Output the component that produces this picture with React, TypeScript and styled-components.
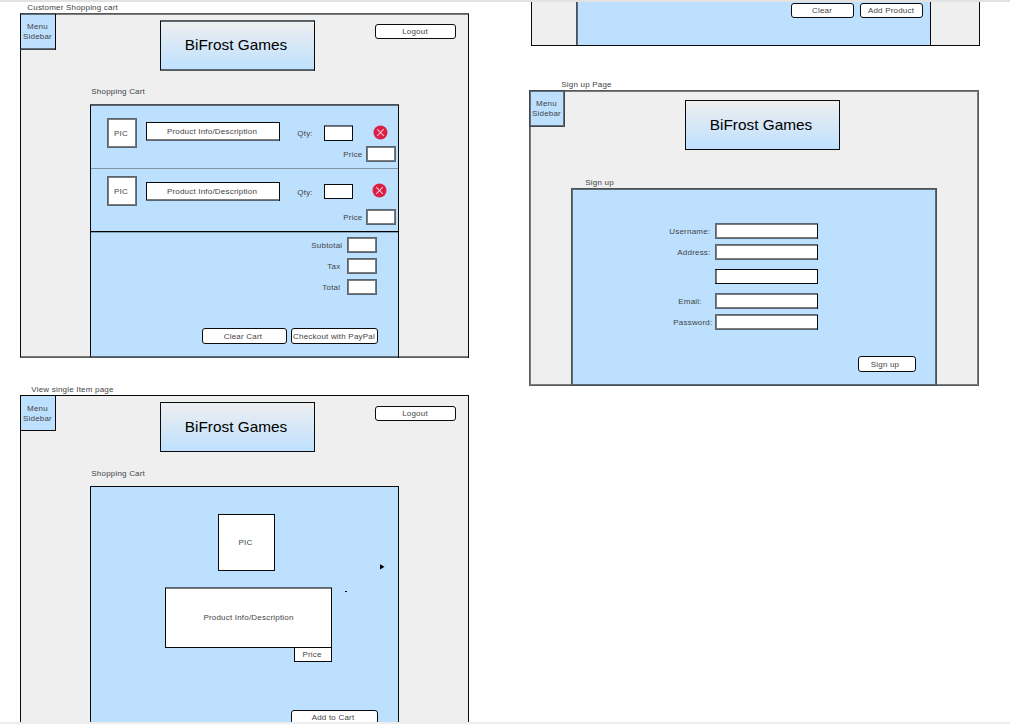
import React from "react";
import styled, { createGlobalStyle, css } from "styled-components";

const GlobalStyle = createGlobalStyle`
  body { margin: 0; background: #fff; }
  *, *::before, *::after { box-sizing: border-box; }
`;

/* Four letters, top/right/bottom/left: c = crisp 1px line, s = soft 2px line, n = none. */
type Edges = string;

const outline = (edges: Edges, outer: string, inner: string) => {
  const dirs = [
    [0, 1],
    [-1, 0],
    [0, -1],
    [1, 0],
  ];
  const first: string[] = [];
  const second: string[] = [];
  edges.split("").forEach((e, i) => {
    if (e === "n") return;
    const [x, y] = dirs[i];
    first.push(`inset ${x}px ${y}px 0 ${e === "c" ? "#0a0a0a" : outer}`);
    if (e === "s") second.push(`inset ${x * 2}px ${y * 2}px 0 ${inner}`);
  });
  return css`
    box-shadow: ${[...first, ...second].join(", ")};
  `;
};

type Place = { $l?: number; $t?: number };
const place = css<Place>`
  margin-left: ${(p) => p.$l ?? 0}px;
  margin-top: ${(p) => p.$t ?? 0}px;
`;

const Canvas = styled.main`
  width: 1010px;
  height: 724px;
  overflow: hidden;
  display: grid;
  grid-template-rows: 2px 720px 2px;
  background: #fff;
  font-family: "Liberation Sans", Arial, sans-serif;
  font-size: 8px;
  line-height: 10px;
  letter-spacing: 0.2px;
  color: #444;
`;

const Edge = styled.div<{ $tone: string }>`
  background: ${(p) => p.$tone};
`;

const Columns = styled.div`
  display: flex;
  align-items: flex-start;
  overflow: hidden;
`;

const Column = styled.section<{ $w: number; $l: number }>`
  width: ${(p) => p.$w}px;
  margin-left: ${(p) => p.$l}px;
  flex: none;
  display: flex;
  flex-direction: column;
  align-items: flex-start;
`;

const Label = styled.div<Place & { $w?: number }>`
  ${place}
  ${(p) => p.$w !== undefined && `width: ${p.$w}px;`}
  flex: none;
  height: 10px;
  line-height: 12px;
  padding-left: 0.3px;
  white-space: nowrap;
`;

const Frame = styled.div<Place & { $w: number; $h: number; $edges: Edges }>`
  ${place}
  width: ${(p) => p.$w}px;
  height: ${(p) => p.$h}px;
  flex: none;
  display: flex;
  flex-direction: column;
  align-items: flex-start;
  background: #efefef;
  ${(p) => outline(p.$edges, "#5a5a5a", "#7c7c7c")}
`;

const Header = styled.header<{ $h: number }>`
  display: flex;
  flex: none;
  align-items: flex-start;
  height: ${(p) => p.$h}px;
`;

const MenuTab = styled.div<{ $h: number; $edges: Edges }>`
  width: 36px;
  height: ${(p) => p.$h}px;
  padding: 9px 1px 0 0;
  flex: none;
  text-align: center;
  background: #bde0ff;
  ${(p) => outline(p.$edges, "#40474e", "#63707c")}
`;

const BrandPlate = styled.div<Place & { $h: number; $edges: Edges }>`
  ${place}
  width: 155px;
  height: ${(p) => p.$h}px;
  padding: 0 3px 1px 0;
  flex: none;
  display: flex;
  align-items: center;
  justify-content: center;
  background: linear-gradient(#efefef, #bde0ff);
  color: #000;
  font-size: 15.35px;
  line-height: 18px;
  letter-spacing: 0;
  white-space: nowrap;
  ${(p) => outline(p.$edges, "#555a5e", "#5d666e")}
`;

const Button = styled.button<Place & { $w: number; $h?: number; $pr?: number }>`
  margin: 0;
  ${place}
  width: ${(p) => p.$w}px;
  height: ${(p) => p.$h ?? 15}px;
  flex: none;
  padding: ${(p) => (p.$h === 16 ? 1 : 0)}px ${(p) => p.$pr ?? 1}px 0 0;
  display: flex;
  align-items: center;
  justify-content: center;
  border: 1px solid #0c0c0c;
  border-radius: 3px;
  background: #fff;
  color: inherit;
  font: inherit;
  letter-spacing: inherit;
  white-space: nowrap;
`;

const Panel = styled.div<Place & { $w: number; $h: number; $edges: Edges }>`
  ${place}
  position: relative;
  width: ${(p) => p.$w}px;
  height: ${(p) => p.$h}px;
  flex: none;
  display: flex;
  flex-direction: column;
  align-items: flex-start;
  background: #bde0ff;
  ${(p) => outline(p.$edges, "#4a5258", "#5d6b77")}
`;

const Box = styled.div<Place & { $w: number; $h: number; $edges?: Edges; $pr?: number; $pt?: number }>`
  ${place}
  width: ${(p) => p.$w}px;
  height: ${(p) => p.$h}px;
  flex: none;
  display: flex;
  align-items: center;
  justify-content: center;
  padding: ${(p) => p.$pt ?? 0}px ${(p) => p.$pr ?? 2}px 0 0;
  background: #fff;
  white-space: nowrap;
  ${(p) => outline(p.$edges ?? "ssss", "#566675", "#7b7b7b")}
`;

const Row = styled.div<Place & { $h?: number }>`
  ${place}
  ${(p) => p.$h !== undefined && `height: ${p.$h}px;`}
  display: flex;
  align-items: flex-start;
  flex: none;
`;

const CartItem = styled.div<{ $h: number }>`
  height: ${(p) => p.$h}px;
  flex: none;
`;

const Rule = styled.div<{ $strong?: boolean }>`
  width: 307px;
  height: ${(p) => (p.$strong ? 2 : 1)}px;
  margin-left: 1px;
  flex: none;
  background: ${(p) => (p.$strong ? "linear-gradient(#000 50%, #86a0b6 50%)" : "#7f96ab")};
`;

const RemoveSvg = styled.svg<Place>`
  ${place}
  width: 15px;
  height: 15px;
  flex: none;
  display: block;
`;

const Marks = styled.svg`
  position: absolute;
  left: 250px;
  top: 74px;
`;

const Remove = (p: Place) => (
  <RemoveSvg {...p} viewBox="0 0 15 15">
    <circle cx="7.5" cy="7.5" r="7" fill="#dc1f44" />
    <path d="M4.2 4.2L10.8 10.8M10.8 4.2L4.2 10.8" stroke="#f7c3cd" strokeWidth="1.1" />
  </RemoveSvg>
);

const Menu = (p: { $h: number; $edges: Edges }) => (
  <MenuTab {...p}>
    Menu
    <br />
    Sidebar
  </MenuTab>
);

const Brand = (p: Place & { $h: number; $edges: Edges }) => (
  <BrandPlate {...p}>BiFrost Games</BrandPlate>
);

const totals = [
  { name: "Subtotal", l: 221, w: 36 },
  { name: "Tax", l: 237, w: 20 },
  { name: "Total", l: 232, w: 25 },
];

const fields = [
  { name: "Username:", l: 98, t: 35, h: 16, edges: "scss" },
  { name: "Address:", l: 106, t: 5, h: 16, edges: "scss" },
  { name: "", l: 106, t: 9, h: 15, edges: "cccs" },
  { name: "Email:", l: 107, t: 9, h: 16, edges: "scss" },
  { name: "Password:", l: 102, t: 5, h: 16, edges: "scss" },
];

export default function App() {
  return (
    <>
      <GlobalStyle />
      <Canvas>
        <Edge $tone="#e2e2e2" />
        <Columns>
          <Column $l={20} $w={449}>
            <Label $l={7}>Customer Shopping cart</Label>
            <Frame $t={1} $w={449} $h={345} $edges="scsc">
              <Header $h={73}>
                <Menu $h={37} $edges="scsc" />
                <Brand $l={104} $t={7} $h={51} $edges="scsc" />
                <Button $l={60} $t={11} $w={81}>Logout</Button>
              </Header>
              <Label $l={71}>Shopping Cart</Label>
              <Panel $l={70} $t={8} $w={309} $h={254} $edges="scsc">
                <CartItem $h={64}>
                  <Row $h={42}>
                    <Box $l={17} $t={14} $w={30} $h={30} $pt={1}>PIC</Box>
                    <Box $l={9} $t={18} $w={134} $h={19} $edges="ccsc">Product Info/Description</Box>
                    <Label $l={17} $t={24} $w={27}>Qty:</Label>
                    <Box $t={21} $w={29} $h={16} $edges="sccc" />
                    <Remove $l={20} $t={21} />
                  </Row>
                  <Row>
                    <Label $l={253} $t={3} $w={23}>Price</Label>
                    <Box $w={30} $h={16} />
                  </Row>
                </CartItem>
                <Rule />
                <CartItem $h={62}>
                  <Row $h={40}>
                    <Box $l={17} $t={7} $w={30} $h={30} $pt={1}>PIC</Box>
                    <Box $l={9} $t={13} $w={134} $h={19} $edges="ccsc">Product Info/Description</Box>
                    <Label $l={17} $t={18} $w={27}>Qty:</Label>
                    <Box $t={15} $w={29} $h={15} $edges="cccc" />
                    <Remove $l={19} $t={14} />
                  </Row>
                  <Row>
                    <Label $l={253} $t={3} $w={23}>Price</Label>
                    <Box $w={30} $h={16} />
                  </Row>
                </CartItem>
                <Rule $strong />
                {totals.map((t, i) => (
                  <Row key={t.name} $t={i ? 5 : 4}>
                    <Label $l={t.l} $t={3} $w={t.w}>{t.name}</Label>
                    <Box $w={30} $h={16} />
                  </Row>
                ))}
                <Row $t={33}>
                  <Button $l={112} $w={85} $h={16} $pr={3}>Clear Cart</Button>
                  <Button $l={4} $w={87} $h={16}>Checkout with PayPal</Button>
                </Row>
              </Panel>
            </Frame>

            <Label $l={11} $t={26}>View single Item page</Label>
            <Frame $t={1} $w={449} $h={345} $edges="cccc">
              <Header $h={73}>
                <Menu $h={36} $edges="cccc" />
                <Brand $l={104} $t={7} $h={50} $edges="cccc" />
                <Button $l={60} $t={11} $w={81}>Logout</Button>
              </Header>
              <Label $l={71}>Shopping Cart</Label>
              <Panel $l={70} $t={8} $w={309} $h={250} $edges="cccc">
                <Box $l={128} $t={28} $w={57} $h={57} $edges="cccc">PIC</Box>
                <Box $l={75} $t={16} $w={167} $h={61} $edges="sccc" $pr={0} $pt={1}>Product Info/Description</Box>
                <Box $l={204} $t={-1} $w={38} $h={15} $edges="cccc">Price</Box>
                <Button $l={201} $t={48} $w={87} $pr={3}>Add to Cart</Button>
                <Marks width="50" height="35">
                  <path d="M40 4.2L44.5 6.8L40 9.4Z" fill="#000" />
                  <rect x="5" y="31" width="2" height="1" fill="#000" />
                </Marks>
              </Panel>
            </Frame>
          </Column>

          <Column $l={60} $w={451}>
            <Frame $l={2} $w={449} $h={44} $edges="nccc">
              <Panel $l={45} $w={355} $h={44} $edges="nccs">
                <Row $t={1}>
                  <Button $l={215} $w={63}>Clear</Button>
                  <Button $l={6} $w={63}>Add Product</Button>
                </Row>
              </Panel>
            </Frame>

            <Label $l={32} $t={33}>Sign up Page</Label>
            <Frame $t={1} $w={450} $h={296} $edges="ssss">
              <Header $h={87}>
                <Menu $h={37} $edges="ssss" />
                <Brand $l={120} $t={10} $h={50} $edges="cccc" />
              </Header>
              <Label $l={56}>Sign up</Label>
              <Panel $l={42} $t={1} $w={366} $h={198} $edges="ssss">
                {fields.map((f) => (
                  <Row key={f.t + f.name} $t={f.t}>
                    <Label $l={f.l} $t={3} $w={144 - f.l}>{f.name}</Label>
                    <Box $w={103} $h={f.h} $edges={f.edges} />
                  </Row>
                ))}
                <Button $l={287} $t={26} $w={58} $h={16} $pr={4}>Sign up</Button>
              </Panel>
            </Frame>
          </Column>
        </Columns>
        <Edge $tone="#ededed" />
      </Canvas>
    </>
  );
}
